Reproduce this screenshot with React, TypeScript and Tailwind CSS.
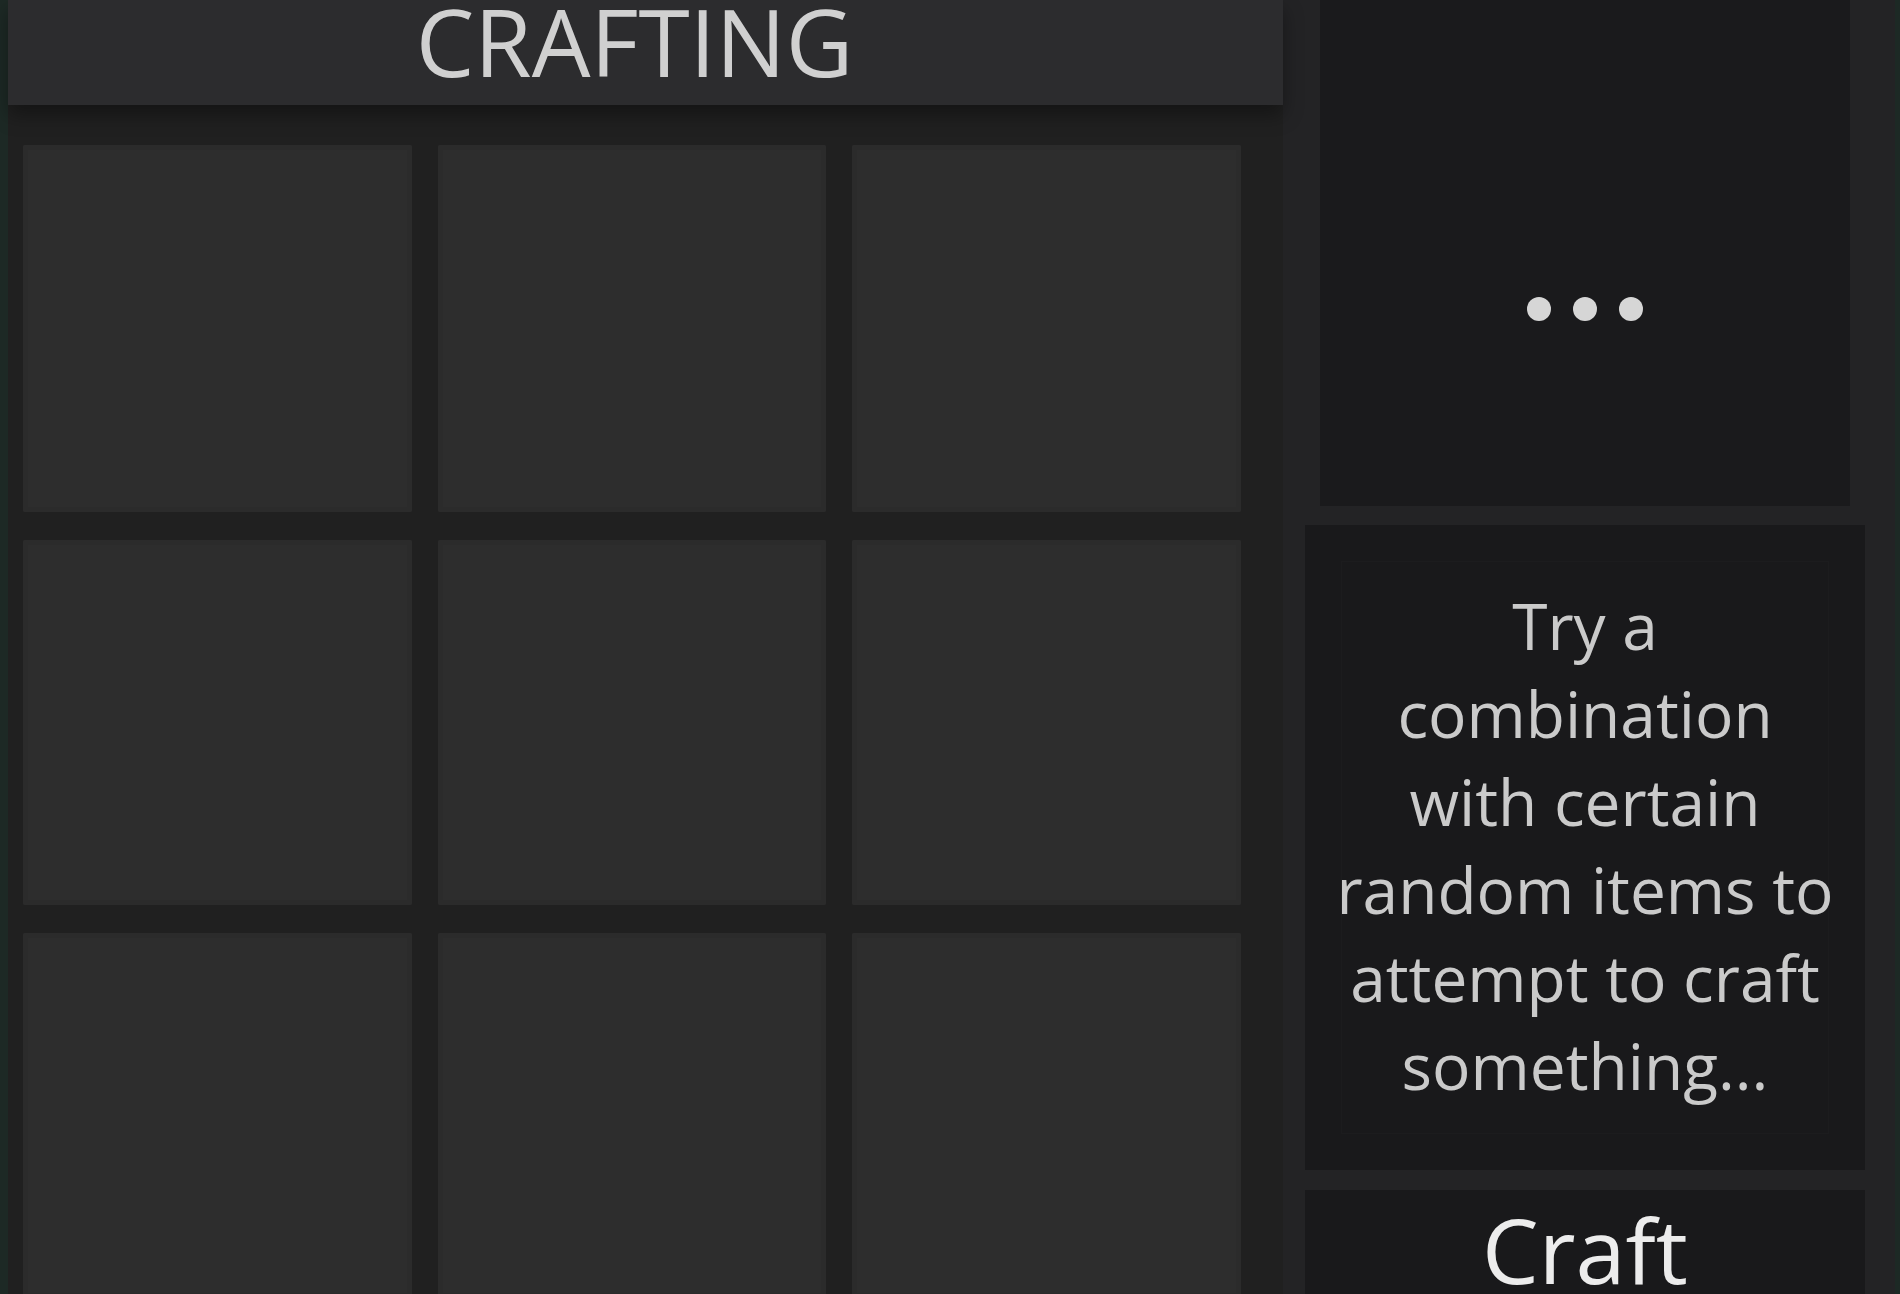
import React from 'react'

const font = { fontFamily: '"Open Sans", "Noto Sans", sans-serif' }

const hint = ['Try a', 'combination', 'with certain', 'random items to', 'attempt to craft', 'something...']

function Slot() {
  return <div className="bg-[#2d2d2d] rounded-[2px] shadow-[inset_0_0_0_5px_#2b2b2b]" />
}

export default function App() {
  return (
    <div className="flex h-[1294px] w-[1900px] overflow-hidden bg-[#1d2925] pl-[8px]" style={font}>
      {/* crafting grid */}
      <div className="flex w-[1275px] flex-col">
        <div className="relative z-10 flex h-[105px] justify-center bg-[#2c2c2e] pr-[22px] shadow-[0_10px_18px_rgba(0,0,0,0.35)]">
          <span className="-mt-[5px] text-[93px] leading-none text-[#d0d0d0]">CRAFTING</span>
        </div>
        <div className="grid flex-1 grid-cols-3 grid-rows-[367px_365px_365px] gap-x-[26px] gap-y-[28px] overflow-hidden bg-[#202020] pl-[15px] pr-[42px] pt-[40px]">
          {Array.from({ length: 9 }).map((_, i) => (
            <Slot key={i} />
          ))}
        </div>
      </div>

      {/* result + hint + button */}
      <div className="flex w-[612px] flex-col bg-[#232325]">
        <div className="ml-[37px] mr-[45px] flex h-[506px] items-center justify-center gap-[22px] bg-[#1a1a1c] pt-[112px]">
          <div className="h-6 w-6 rounded-full bg-[#d6d6d6]" />
          <div className="h-6 w-6 rounded-full bg-[#d6d6d6]" />
          <div className="h-6 w-6 rounded-full bg-[#d6d6d6]" />
        </div>
        <div className="ml-[22px] mr-[30px] mt-[19px] h-[645px] bg-[#19191b] p-[36px]">
          <div className="flex h-full flex-col items-center justify-center border border-[#1c1c1e] pb-[4px]">
            {hint.map((line) => (
              <div key={line} className="whitespace-nowrap text-[64px] leading-[88px] text-[#cacaca]">
                {line}
              </div>
            ))}
          </div>
        </div>
        <div className="ml-[22px] mr-[30px] mt-[20px] flex flex-1 justify-center bg-[#19191b] pt-[14px]">
          <span className="text-[90px] leading-none text-[#ececec]">Craft</span>
        </div>
      </div>
    </div>
  )
}
